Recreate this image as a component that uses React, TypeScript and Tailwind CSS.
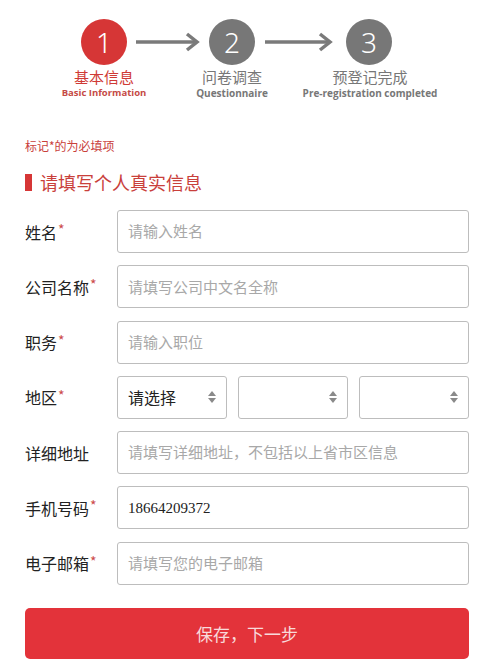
import React from "react";

const cjk = { fontFamily: '"Noto Sans CJK SC", "Noto Sans", sans-serif' };

const Arrow = ({ w }: { w: number }) => (
  <svg width={w} height="20" viewBox={`0 0 ${w} 20`} fill="none">
    <line x1="0" y1="10" x2={w - 3} y2="10" stroke="#7a7a7a" strokeWidth="3.5" />
    <polyline
      points={`${w - 13},2 ${w - 3},10 ${w - 13},18`}
      stroke="#7a7a7a"
      strokeWidth="3.5"
      fill="none"
    />
  </svg>
);

const Stepper = () => (
  <div className="pt-[19px]">
    <div className="flex items-center">
      <div className="ml-[81px] w-[46px] h-[46px] rounded-full bg-[#d63636] flex items-center justify-center text-white text-[28px] font-light leading-none" style={{ fontFamily: '"Noto Sans", sans-serif' }}>
        1
      </div>
      <div className="ml-[9px]">
        <Arrow w={64} />
      </div>
      <div className="ml-[9px] w-[46px] h-[46px] rounded-full bg-[#777777] flex items-center justify-center text-white text-[28px] font-light leading-none" style={{ fontFamily: '"Noto Sans", sans-serif' }}>
        2
      </div>
      <div className="ml-[10px]">
        <Arrow w={68} />
      </div>
      <div className="ml-[13px] w-[46px] h-[46px] rounded-full bg-[#777777] flex items-center justify-center text-white text-[28px] font-light leading-none" style={{ fontFamily: '"Noto Sans", sans-serif' }}>
        3
      </div>
    </div>
    <div className="flex mt-[2px]">
      <div className="ml-[44px] w-[120px] flex flex-col items-center">
        <span className="text-[15px] leading-[20px] text-[#cf3a35]" style={cjk}>基本信息</span>
        <span className="text-[9.5px] leading-[12px] font-bold text-[#c54a45] whitespace-nowrap" style={{ fontFamily: '"Open Sans", sans-serif' }}>Basic Information</span>
      </div>
      <div className="ml-[8px] w-[120px] flex flex-col items-center">
        <span className="text-[15px] leading-[20px] text-[#777]" style={cjk}>问卷调查</span>
        <span className="text-[10px] leading-[12px] font-bold text-[#777]" style={{ fontFamily: '"Open Sans", sans-serif' }}>Questionnaire</span>
      </div>
      <div className="ml-[8px] w-[140px] flex flex-col items-center">
        <span className="text-[15px] leading-[20px] text-[#777]" style={cjk}>预登记完成</span>
        <span className="text-[10px] leading-[12px] font-bold text-[#777] whitespace-nowrap" style={{ fontFamily: '"Open Sans", sans-serif' }}>Pre-registration completed</span>
      </div>
    </div>
  </div>
);

const Label = ({ text, required }: { text: string; required?: boolean }) => (
  <div className="w-[92px] shrink-0 flex items-center text-[16px] text-[#222]" style={cjk}>
    {text}
    {required && <span className="text-[#cc4a4a] text-[14px] leading-none -mt-[5px] ml-[1px]">*</span>}
  </div>
);

const Field = ({ label, required, placeholder, value }: { label: string; required?: boolean; placeholder?: string; value?: string }) => (
  <div className="flex items-center">
    <Label text={label} required={required} />
    <div className="flex-1 h-[43px] border border-[#bdbdbd] rounded-[3px] flex items-center px-[10px] bg-white">
      {value ? (
        <span className="text-[15px] text-[#222]" style={{ fontFamily: '"Liberation Serif", serif' }}>{value}</span>
      ) : (
        <span className="text-[15px] text-[#a8a8a8]" style={cjk}>{placeholder}</span>
      )}
    </div>
  </div>
);

const Spinner = () => (
  <svg width="10" height="16" viewBox="0 0 10 16">
    <polygon points="1,7 5,2 9,7" fill="#8a8a8a" />
    <polygon points="1,9 5,14 9,9" fill="#8a8a8a" />
  </svg>
);

const SelectBox = ({ text }: { text?: string }) => (
  <div className="flex-1 h-[43px] border border-[#bdbdbd] rounded-[3px] flex items-center justify-between pl-[10px] pr-[9px] bg-white">
    <span className="text-[16px] text-[#222]" style={cjk}>{text}</span>
    <Spinner />
  </div>
);

const App = () => {
  return (
    <div className="w-[494px] h-[667px] bg-white overflow-hidden" style={cjk}>
      <Stepper />
      <div className="px-[25px]">
        <p className="mt-[39px] text-[12px] leading-[16px] text-[#c9403b]">标记*的为必填项</p>
        <div className="mt-[17px] flex items-center">
          <div className="w-[7px] h-[17px] bg-[#d63636]" />
          <h2 className="ml-[8px] text-[18px] leading-[22px] text-[#c9403b]">请填写个人真实信息</h2>
        </div>
        <div className="mt-[17px] flex flex-col gap-[12.3px]">
          <Field label="姓名" required placeholder="请输入姓名" />
          <Field label="公司名称" required placeholder="请填写公司中文名全称" />
          <Field label="职务" required placeholder="请输入职位" />
          <div className="flex items-center">
            <Label text="地区" required />
            <div className="flex-1 flex gap-[11px]">
              <SelectBox text="请选择" />
              <SelectBox />
              <SelectBox />
            </div>
          </div>
          <Field label="详细地址" placeholder="请填写详细地址，不包括以上省市区信息" />
          <Field label="手机号码" required value="18664209372" />
          <Field label="电子邮箱" required placeholder="请填写您的电子邮箱" />
        </div>
        <button className="mt-[23px] w-full h-[51px] rounded-[5px] bg-[#e3333a] text-[17px] text-[#f8dada]">
          保存，下一步
        </button>
      </div>
    </div>
  );
};

export default App;
